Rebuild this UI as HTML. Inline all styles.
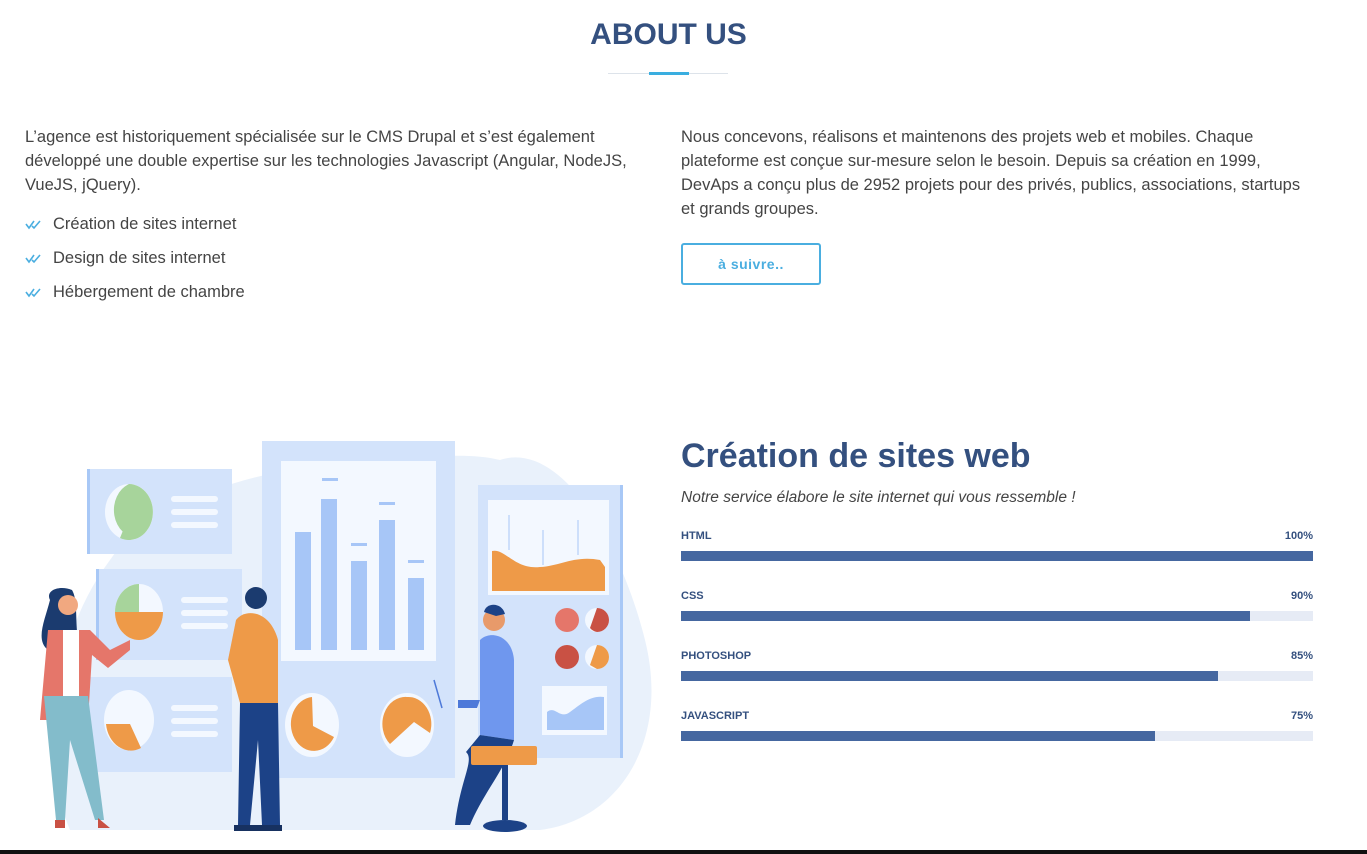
<!DOCTYPE html>
<html><head><meta charset="utf-8"><style>
*{margin:0;padding:0;box-sizing:border-box}
body{width:1367px;height:854px;overflow:hidden;background:#fff;font-family:"Liberation Sans",sans-serif;position:relative;color:#444}
.abs{position:absolute}
h1{position:absolute;left:0;width:1337px;text-align:center;top:18px;font-size:30px;font-weight:bold;color:#34507f}
.p{font-size:16.5px;line-height:24px;color:#444}
.li{position:absolute;left:25px;font-size:16.5px;color:#444}
.li svg{position:absolute;left:0;top:4px}
.li span{position:absolute;left:28px;white-space:nowrap}
.lab{position:absolute;left:681px;width:632px;font-size:11px;font-weight:bold;color:#34507f}
.lab b{position:absolute;right:0}
.bar{position:absolute;left:681px;width:632px;height:10px;background:#e6ebf5}
.bar i{display:block;height:10px;background:#4567a0}
</style></head><body>
<h1>ABOUT US</h1>
<div class="abs" style="left:608px;top:73px;width:120px;height:1px;background:#dde3ea"></div>
<div class="abs" style="left:649px;top:72px;width:40px;height:3px;background:#3aaee0"></div>

<div class="abs p" style="left:25px;top:125px;width:605px">L’agence est historiquement spécialisée sur le CMS Drupal et s’est également développé une double expertise sur les technologies Javascript (Angular, NodeJS, VueJS, jQuery).</div>
<div class="li" style="top:215px"><svg width="18" height="12" viewBox="0 0 18 12"><path d="M1 5l3 4 5-7M7 7l2 2 6-7" fill="none" stroke="#4aaee0" stroke-width="1.6"/></svg><span>Création de sites internet</span></div>
<div class="li" style="top:249px"><svg width="18" height="12" viewBox="0 0 18 12"><path d="M1 5l3 4 5-7M7 7l2 2 6-7" fill="none" stroke="#4aaee0" stroke-width="1.6"/></svg><span>Design de sites internet</span></div>
<div class="li" style="top:283px"><svg width="18" height="12" viewBox="0 0 18 12"><path d="M1 5l3 4 5-7M7 7l2 2 6-7" fill="none" stroke="#4aaee0" stroke-width="1.6"/></svg><span>Hébergement de chambre</span></div>

<div class="abs p" style="left:681px;top:125px;width:632px">Nous concevons, réalisons et maintenons des projets web et mobiles. Chaque plateforme est conçue sur-mesure selon le besoin. Depuis sa création en 1999, DevAps a conçu plus de 2952 projets pour des privés, publics, associations, startups et grands groupes.</div>
<div class="abs" style="left:681px;top:243px;width:140px;height:42px;border:2px solid #4aaee0;border-radius:3px;text-align:center;line-height:38px;font-size:14px;font-weight:bold;color:#4aaee0;letter-spacing:0.5px">à suivre..</div>

<div class="abs" style="left:681px;top:437px;font-size:34px;font-weight:bold;color:#34507f;white-space:nowrap">Création de sites web</div>
<div class="abs" style="left:681px;top:489px;font-size:15.5px;font-style:italic;color:#444;white-space:nowrap">Notre service élabore le site internet qui vous ressemble !</div>

<div class="lab" style="top:530px">HTML<b>100%</b></div><div class="bar" style="top:551px"><i style="width:100%"></i></div>
<div class="lab" style="top:590px">CSS<b>90%</b></div><div class="bar" style="top:611px"><i style="width:90%"></i></div>
<div class="lab" style="top:650px">PHOTOSHOP<b>85%</b></div><div class="bar" style="top:671px"><i style="width:85%"></i></div>
<div class="lab" style="top:710px">JAVASCRIPT<b>75%</b></div><div class="bar" style="top:731px"><i style="width:75%"></i></div>

<svg class="abs" style="left:0;top:0" width="680" height="854" viewBox="0 0 680 854">
<path d="M70 830 C40 760 50 640 110 560 C150 500 260 470 330 465 C400 460 460 450 500 460 C560 440 620 540 645 640 C670 740 620 820 540 830 Z" fill="#e9f1fb"/>
<rect x="87" y="469" width="145" height="85" fill="#d3e3fb"/><rect x="87" y="469" width="3" height="85" fill="#a8c8f6"/>
<ellipse cx="129" cy="512" rx="24" ry="28" fill="#f3f8ff"/><path d="M129 484 A24 28 0 1 1 120 538 L128 518 L138 538 A24 28 0 0 1 129 484Z" fill="#a7d49b"/>
<rect x="171" y="496" width="47" height="6" rx="3" fill="#f3f8ff"/><rect x="171" y="509" width="47" height="6" rx="3" fill="#f3f8ff"/><rect x="171" y="522" width="47" height="6" rx="3" fill="#f3f8ff"/>
<rect x="96" y="569" width="146" height="91" fill="#d3e3fb"/><rect x="96" y="569" width="3" height="91" fill="#a8c8f6"/>
<ellipse cx="139" cy="612" rx="24" ry="28" fill="#f3f8ff"/><path d="M115 612 A24 28 0 0 0 163 612Z" fill="#ee9a48"/><path d="M139 584 A24 28 0 0 0 115 612 L139 612Z" fill="#a7d49b"/>
<rect x="181" y="597" width="47" height="6" rx="3" fill="#f3f8ff"/><rect x="181" y="610" width="47" height="6" rx="3" fill="#f3f8ff"/><rect x="181" y="623" width="47" height="6" rx="3" fill="#f3f8ff"/>
<rect x="87" y="677" width="145" height="95" fill="#d3e3fb"/>
<ellipse cx="129" cy="720" rx="25" ry="30" fill="#f3f8ff"/><path d="M106 724 L130 724 L141 748 A25 30 0 0 1 106 724Z" fill="#ee9a48"/>
<rect x="171" y="705" width="47" height="6" rx="3" fill="#f3f8ff"/><rect x="171" y="718" width="47" height="6" rx="3" fill="#f3f8ff"/><rect x="171" y="731" width="47" height="6" rx="3" fill="#f3f8ff"/>
<rect x="262" y="441" width="193" height="337" fill="#d3e3fb"/>
<rect x="281" y="461" width="155" height="200" fill="#f3f8ff"/>
<g fill="#a7c6f7"><rect x="295" y="532" width="16" height="118"/><rect x="321" y="499" width="16" height="151"/><rect x="351" y="561" width="16" height="89"/><rect x="379" y="520" width="16" height="130"/><rect x="408" y="578" width="16" height="72"/>
<rect x="322" y="478" width="16" height="3"/><rect x="351" y="543" width="16" height="3"/><rect x="379" y="502" width="16" height="3"/><rect x="408" y="560" width="16" height="3"/></g>
<ellipse cx="312" cy="725" rx="27" ry="32" fill="#f3f8ff"/><path d="M312 697 A23 27 0 1 0 334 737 L313 726Z" fill="#ee9a48"/>
<ellipse cx="407" cy="725" rx="27" ry="32" fill="#f3f8ff"/><path d="M407 697 A23 27 0 0 1 430 733 L414 722 L390 744 A23 27 0 0 1 407 697Z" fill="#ee9a48"/>
<rect x="478" y="485" width="145" height="273" fill="#d3e3fb"/><rect x="620" y="485" width="3" height="273" fill="#a8c8f6"/>
<rect x="488" y="500" width="121" height="95" fill="#f3f8ff"/>
<path d="M492 551 C505 548 515 570 540 567 C560 566 575 555 600 560 L605 567 L605 591 L492 591Z" fill="#ee9a48"/>
<g stroke="#a7c6f7"><line x1="509" y1="515" x2="509" y2="550"/><line x1="543" y1="530" x2="543" y2="565"/><line x1="578" y1="520" x2="578" y2="555"/></g>
<circle cx="567" cy="620" r="12" fill="#e5766a"/><circle cx="597" cy="620" r="12" fill="#f3f8ff"/><path d="M597 608 A12 12 0 0 1 597 632 A12 12 0 0 1 590 628Z" fill="#c95144"/>
<circle cx="567" cy="657" r="12" fill="#c95144"/><circle cx="597" cy="657" r="12" fill="#f3f8ff"/><path d="M597 645 A12 12 0 0 1 597 669 L590 665Z" fill="#ee9a48"/>
<rect x="542" y="686" width="65" height="49" fill="#f3f8ff"/><path d="M547 730 L547 712 C555 705 560 720 570 712 C580 705 590 695 604 697 L604 730Z" fill="#a7c6f7"/>
<path d="M50 600 C45 590 60 585 72 590 C78 600 75 620 78 640 L48 650 C35 640 45 620 50 600Z" fill="#1b3b6f"/>
<circle cx="68" cy="605" r="10" fill="#f1a880"/>
<path d="M48 630 L90 630 L110 650 L130 640 L130 650 L108 668 L92 655 L88 720 L40 720Z" fill="#e5766a"/>
<rect x="63" y="630" width="16" height="66" fill="#fff"/>
<path d="M44 696 L88 696 L104 820 L95 820 L70 740 L65 820 L56 820 Z" fill="#83bccb"/>
<path d="M55 820 h10 v8 h-10z M98 818 l12 10 h-12z" fill="#c95144"/>
<circle cx="256" cy="598" r="11" fill="#1b3b6f"/>
<path d="M236 620 C245 608 270 610 278 640 L278 703 L240 703 L228 660Z" fill="#ee9a48"/>
<path d="M240 703 L278 703 L280 825 L262 825 L258 740 L250 825 L238 825Z" fill="#1c4287"/>
<path d="M234 825 h24 v6 h-24z M258 825 h24 v6 h-24z" fill="#173160"/>
<circle cx="494" cy="620" r="11" fill="#e89a6a"/><path d="M484 612 C486 602 502 602 505 614 L496 616Z" fill="#1c4287"/>
<path d="M480 640 C490 630 512 635 514 660 L514 740 L480 735Z" fill="#6f97ee"/>
<path d="M458 700 L480 700 L477 708 L458 708Z" fill="#4d79d9"/>
<path d="M480 735 L514 740 C505 770 485 790 470 825 L455 825 C460 780 475 760 466 752Z" fill="#1c4287"/>
<rect x="471" y="746" width="66" height="19" rx="2" fill="#ee9a48"/>
<rect x="502" y="765" width="6" height="55" fill="#1c4287"/><ellipse cx="505" cy="826" rx="22" ry="6" fill="#1c4287"/>
<line x1="434" y1="680" x2="442" y2="708" stroke="#4d79d9" stroke-width="1.5"/>
</svg>
<div class="abs" style="left:0;top:850px;width:1367px;height:4px;background:#111"></div>
</body></html>
